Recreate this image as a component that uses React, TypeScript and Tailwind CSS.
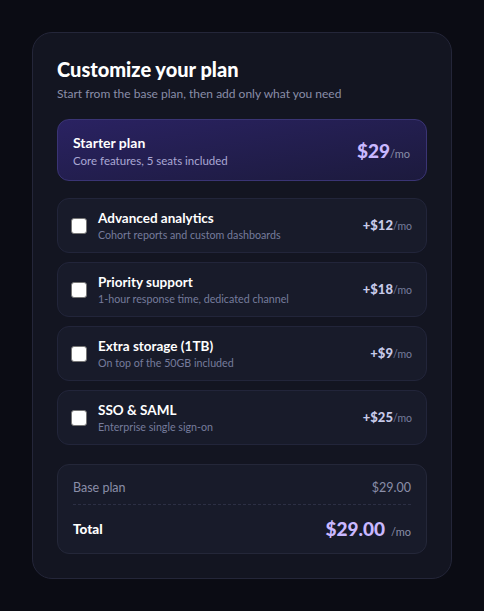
import { useState } from 'react';

type Addon = {
  id: string;
  name: string;
  desc: string;
  price: number;
};

const ADDONS: Addon[] = [
  { id: 'analytics', name: 'Advanced analytics', desc: 'Cohort reports and custom dashboards', price: 12 },
  { id: 'support', name: 'Priority support', desc: '1-hour response time, dedicated channel', price: 18 },
  { id: 'storage', name: 'Extra storage (1TB)', desc: 'On top of the 50GB included', price: 9 },
  { id: 'sso', name: 'SSO & SAML', desc: 'Enterprise single sign-on', price: 25 },
];

const BASE = 29;

export default function App() {
  const [selected, setSelected] = useState<Record<string, boolean>>({});
  const total = BASE + ADDONS.reduce((sum, a) => sum + (selected[a.id] ? a.price : 0), 0);

  return (
    <div
      className="min-h-[611px] w-full bg-[#0b0c14] pt-8 pl-8"
      style={{ fontFamily: 'Lato, "Noto Sans", sans-serif' }}
    >
      <div className="w-[420px] rounded-[20px] border border-[#242639] bg-[#131521] p-6">
        <h1 className="text-[20px] font-black leading-6 text-white">Customize your plan</h1>
        <p className="mt-[3px] text-[12px] leading-5 text-[#8a8ea8]">
          Start from the base plan, then add only what you need
        </p>

        {/* Base plan */}
        <div className="mt-[15px] flex h-[62px] items-center justify-between rounded-xl border border-[#3a3474] bg-gradient-to-br from-[#2a2262] to-[#1c1a3d] pl-[15px] pr-4 pt-[2px]">
          <div>
            <div className="text-[14px] font-bold leading-5 text-white">Starter plan</div>
            <div className="text-[11.5px] leading-4 text-[#aaa8d4]">Core features, 5 seats included</div>
          </div>
          <div className="flex items-baseline">
            <span className="text-[19px] font-black text-[#c9b8ff]">$29</span>
            <span className="text-[11px] text-[#8a8ea8]">/mo</span>
          </div>
        </div>

        {/* Add-ons */}
        <div className="mt-[17px] flex flex-col gap-[9px]">
          {ADDONS.map((a) => (
            <label
              key={a.id}
              className="flex h-[55px] cursor-pointer items-center rounded-xl border border-[#22253a] bg-[#181b2a] pl-[13px] pr-[14px]"
            >
              <input
                type="checkbox"
                checked={!!selected[a.id]}
                onChange={(e) => setSelected({ ...selected, [a.id]: e.target.checked })}
                className="h-4 w-4 shrink-0 appearance-none rounded-[3px] border border-[#767676] bg-white checked:bg-[#8b5cf6]"
              />
              <div className="ml-[11px] min-w-0 flex-1 pt-[1px]">
                <div className="text-[13.5px] font-bold leading-[18px] text-white">{a.name}</div>
                <div className="text-[10.7px] leading-4 text-[#767b9c]">{a.desc}</div>
              </div>
              <div className="flex items-baseline">
                <span className="text-[13px] font-black text-[#c7cae9]">+${a.price}</span>
                <span className="text-[10.5px] text-[#767b9c]">/mo</span>
              </div>
            </label>
          ))}
        </div>

        {/* Summary */}
        <div className="mt-[19px] rounded-xl border border-[#242739] bg-[#181b2a] px-[15px] pt-[13px] pb-[9px]">
          <div className="flex items-center justify-between text-[12.5px] leading-5 text-[#8a8ea8]">
            <span>Base plan</span>
            <span>${BASE.toFixed(2)}</span>
          </div>
          <div className="mt-[6px] border-t border-dashed border-[#2c2f44]" />
          <div className="mt-[10px] flex items-center justify-between">
            <span className="text-[13.5px] font-black text-white">Total</span>
            <div className="flex items-baseline gap-[6px]">
              <span className="text-[19px] font-black text-[#c9b8ff]">${total.toFixed(2)}</span>
              <span className="text-[11px] text-[#8a8ea8]">/mo</span>
            </div>
          </div>
        </div>
      </div>
    </div>
  );
}
